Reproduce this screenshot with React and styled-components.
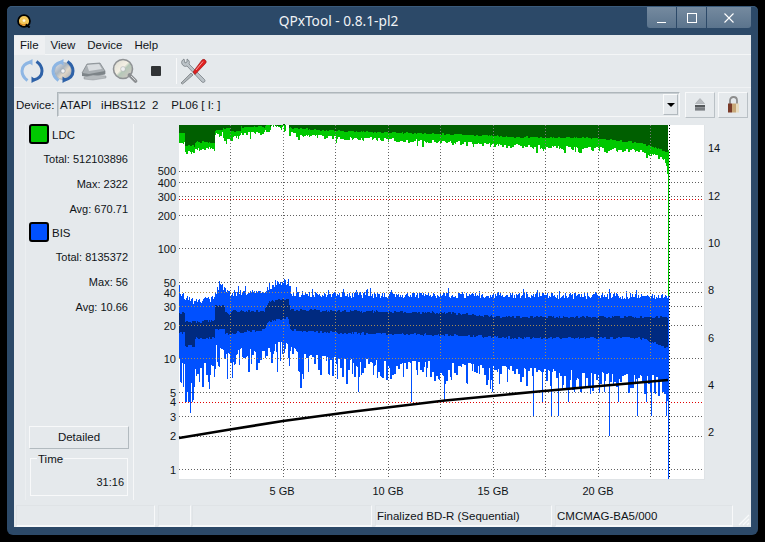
import React from "react";
import styled, { createGlobalStyle } from "styled-components";

const GlobalStyle = createGlobalStyle`
  html, body { margin: 0; padding: 0; background: #000; }
  body { font-family: "Liberation Sans", Arial, sans-serif; font-size: 11.5px; color: #101418; }
`;

const Screen = styled.div`
  width: 765px; height: 542px; background: #000; padding: 6px 7px 7px 7px;
  box-sizing: border-box; overflow: hidden;
`;
const Win = styled.div`
  width: 751px; height: 529px; background: #2c4968; border-radius: 5px 5px 6px 6px;
  padding: 0 7px 8px 7px; box-sizing: border-box; display: flex; flex-direction: column;
  box-shadow: inset 0 1px 0 #3a5a7a;
`;
const TitleBar = styled.div`
  height: 29px; flex: none; display: flex; align-items: flex-start; position: relative;
`;
const Logo = styled.svg`
  width: 14px; height: 14px; margin: 8px 0 0 3px; flex: none;
`;
const Title = styled.div`
  flex: 1; text-align: center; color: #f0f3f6; font-family: "Noto Sans", sans-serif; font-size: 13.7px; line-height: 18px;
  padding: 6px 0 0 0; margin-left: 0; margin-right: 105px;
`;
const Controls = styled.div`
  position: absolute; right: 0; top: 1px; display: flex; gap: 1px;
`;
const CtrlBtn = styled.div`
  width: ${p => p.$w}px; height: 21px; display: flex; align-items: center; justify-content: center;
  background: linear-gradient(#758a9f, #5b748d);
  border-radius: ${p => p.$r || "0"};
`;
const Client = styled.div`
  flex: 1; background: #e5e9ec; display: flex; flex-direction: column; min-height: 0;
`;
const MenuBar = styled.div`
  height: 20px; flex: none; display: flex; box-sizing: border-box; border-bottom: 1px solid #f4f6f7;
  align-items: stretch;
`;
const MenuItem = styled.div`
  padding: 0 6px; line-height: 19px; height: 19px; box-sizing: border-box;
  background: ${p => (p.$active ? "#eef0f2" : "transparent")};
  margin-top: 1px; font-size: 11.5px;
`;
const Toolbar = styled.div`
  height: 33px; flex: none; display: flex; align-items: center; padding-left: 2px;
  box-sizing: border-box; border-bottom: 1px solid #f0f2f4;
`;
const ToolIcon = styled.div`
  width: 31px; height: 28px; flex: none; display: flex; align-items: center; justify-content: center;
`;
const ToolSep = styled.div`
  width: 1px; height: 26px; background: #f8f9fa; margin: 0 0 0 5px;
`;
const DeviceRow = styled.div`
  height: 32px; flex: none; display: flex; align-items: center; box-sizing: border-box; padding: 1px 0 0 2px;
`;
const DeviceLabel = styled.div`
  width: 41px; flex: none;
`;
const Combo = styled.div`
  width: 623px; height: 25px; flex: none; box-sizing: border-box; display: flex; align-items: center;
  border: 1px solid #aeb6bb; border-right-color: #f6f7f8; border-bottom-color: #f6f7f8;
  box-shadow: inset 1px 1px 0 #c8ced2; padding: 0 1px 0 2px;
`;
const ComboText = styled.div`
  flex: 1; white-space: pre;
`;
const ComboArrow = styled.div`
  width: 15px; height: 21px; box-sizing: border-box; display: flex; align-items: center; justify-content: center;
  border: 1px solid; border-color: #fafbfb #b2b9be #b2b9be #fafbfb;
  &::after { content: ""; border-style: solid; border-width: 4px 4px 0 4px; border-color: #000 transparent transparent transparent; }
`;
const SquareBtn = styled.div`
  width: 30px; height: 26px; flex: none; margin-left: ${p => p.$ml}px; box-sizing: border-box;
  display: flex; align-items: center; justify-content: center;
  border: 1px solid; border-color: #f8f9fa #b9c0c5 #b9c0c5 #f8f9fa;
`;
const Main = styled.div`
  flex: 1; display: flex; min-height: 0;
`;
const Side = styled.div`
  width: 109px; flex: none; margin: 4px 0 0 11px; box-sizing: border-box; height: 376px;
  border-left: 1px solid #eceff1; border-right: 1px solid #f6f7f8;
  padding: 0 5px 0 3px; display: flex; flex-direction: column;
`;
const LegendHead = styled.div`
  display: flex; align-items: center; gap: 3px; height: 20px; flex: none;
`;
const LegendLabel = styled.span`
  margin-top: 2px;
`;
const Swatch = styled.div`
  width: 20px; height: 20px; box-sizing: border-box; border: 2px solid #000; border-radius: 3px;
  background: ${p => p.$c}; flex: none;
`;
const StatRow = styled.div`
  height: 25px; line-height: 25px; text-align: right; font-size: 11px; white-space: nowrap;
`;
const Stats = styled.div`
  padding-top: 3px; flex: none;
`;
const Detailed = styled.div`
  width: 100px; height: 23px; flex: none; box-sizing: border-box; line-height: 21px; text-align: center;
  border: 1px solid; border-color: #f8f9fa #b2babf #b2babf #f8f9fa; margin-top: ${p => p.$mt}px;
`;
const TimeBox = styled.div`
  width: 98px; height: 38px; flex: none; box-sizing: border-box; margin: 9px 0 0 1px; position: relative;
  border: 1px solid #f8f9fa; text-align: right; padding: 13px 3px 0 0; line-height: 20px; font-size: 11px;
`;
const TimeLegend = styled.div`
  position: absolute; left: 6px; top: -7px; background: #e5e9ec; padding: 0 1px; line-height: 15px; font-size: 11.5px;
`;
const ChartSvg = styled.svg`
  width: 617px; height: 385px; flex: none; display: block;
  font-family: "Liberation Sans", Arial, sans-serif; font-size: 11px;
`;
const StatusBar = styled.div`
  height: 22px; flex: none; display: flex; box-sizing: border-box; padding-left: 2px; position: relative;
`;
const StatusCell = styled.div`
  width: ${p => p.$w}px; margin-right: ${p => p.$mr}px; flex: none; box-sizing: border-box;
  border-top: 1px solid #dfe3e6; border-left: 1px solid #dfe3e6; border-bottom: 2px solid #f8f9fa; border-right: 1px solid #f8f9fa;
  line-height: 20px; padding-left: 1px; white-space: nowrap;
`;
const Grip = styled.svg`
  position: absolute; right: 1px; bottom: 1px; width: 14px; height: 14px;
`;

/* ---- chart data ---- */
function rng(seed) {
  let a = seed;
  return () => {
    a |= 0; a = (a + 0x6d2b79f5) | 0;
    let t = Math.imul(a ^ (a >>> 15), 1 | a);
    t = (t + Math.imul(t ^ (t >>> 7), 61 | t)) ^ t;
    return ((t ^ (t >>> 14)) >>> 0) / 4294967296;
  };
}
const lerp = (pts, x) => {
  for (let i = 1; i < pts.length; i++) {
    if (x <= pts[i][0]) {
      const [x0, y0] = pts[i - 1]; const [x1, y1] = pts[i];
      return y0 + ((y1 - y0) * (x - x0)) / (x1 - x0 || 1);
    }
  }
  return pts[pts.length - 1][1];
};

const X0 = 179, X1 = 668, TOP = 125;
const darkG = [[179,133],[184,133],[185,146],[194,146],[195,142],[214,142],[215,130],[222,130],[223,128],[229,128],[230,131],[240,131],[241,127],[264,127],[265,126],[270,126],[271,125],[288,125],[289,128],[340,131],[440,134],[520,137],[590,138],[640,143],[655,148],[667,152]];
const lightG = [[179,143],[184,143],[185,152],[194,153],[195,149],[214,149],[215,133],[222,134],[223,140],[229,140],[230,136],[240,137],[241,133],[264,134],[265,131],[270,130],[271,126],[283,126],[284,133],[285,133],[289,134],[340,138],[440,142],[500,146],[570,148],[600,149],[640,151],[655,156],[664,160],[667,172]];
const blueT = [[179,292],[185,298],[195,302],[214,298],[216,293],[219,284],[226,291],[231,296],[240,293],[262,293],[275,285],[284,281],[289,286],[292,294],[340,295],[668,296]];
const dkT = [[179,313],[184,313],[185,322],[214,321],[215,306],[224,306],[225,312],[230,314],[232,311],[264,311],[266,306],[270,301],[288,299],[290,310],[340,311],[450,313],[500,317],[668,317]];
const dkB = [[179,333],[184,333],[185,346],[194,346],[195,338],[214,338],[215,329],[224,329],[225,334],[230,333],[264,330],[268,322],[288,318],[290,330],[340,333],[450,335],[520,338],[640,338],[668,348]];
const blueB = [[179,358],[184,362],[185,378],[194,380],[195,362],[214,362],[216,345],[226,350],[232,356],[240,348],[262,350],[272,346],[284,338],[290,345],[300,352],[340,358],[450,362],[600,372],[668,376]];

const spikes = { 186: 402, 192: 402, 358: 392, 411: 402, 444: 400, 492: 392, 533: 416, 542: 402, 551: 416, 558: 416, 568: 402, 590: 394, 604: 392, 609: 436, 618: 402, 637: 416, 646: 402, 651: 416, 666: 416 };

function buildPaths() {
  const r = rng(20240611);
  let g1 = "", g2 = "", b1 = "", b2 = "";
  let nL = 0, nD = 0, nDT = 0, nDB = 0, nB = 0;
  for (let x = X0; x < X1; x++) {
    const px = x + 0.5;
    if (x % 2 === 0 || r() < 0.3) {
      nL = (r() - 0.5) * 4 + (r() < 0.06 ? 4 : 0);
      nD = (r() - 0.5) * 1.5;
      nDT = (r() - 0.5) * 2.5;
      nDB = (r() - 0.5) * 2.5;
      nB = Math.pow(r(), 1.5) * (x < 350 ? 30 : 22) + (r() < 0.05 ? 8 : 0);
    }
    const nT = (r() - 0.5) * 6 - (r() < 0.07 ? 5 : 0);
    if (x < 286 || x > 288) {
      const lb = Math.round(lerp(lightG, x) + nL);
      const db = Math.round(lerp(darkG, x) + nD);
      g1 += `M${px} ${TOP}V${lb}`;
      g2 += `M${px} ${TOP}V${Math.min(db, lb)}`;
    }
    const t = Math.round(lerp(blueT, x) + nT);
    const b = spikes[x] || Math.round(lerp(blueB, x) + nB);
    b1 += `M${px} ${t}V${b}`;
    b2 += `M${px} ${Math.round(lerp(dkT, x) + nDT)}V${Math.round(lerp(dkB, x) + nDB)}`;
  }
  return { g1, g2, b1, b2 };
}
const paths = buildPaths();

const gridY = [171, 182, 196, 215, 248, 282, 292, 306, 325, 358, 392, 416, 436, 469];
const gridX = [230, 283, 335, 388, 440, 493, 545, 598, 650];
const leftLabels = [[500,171],[400,183],[300,197],[200,216],[100,249],[50,283],[40,293],[30,307],[20,326],[10,359],[5,393],[4,402],[3,417],[2,436],[1,470]];
const rightLabels = [[14,148],[12,196],[10,243],[8,290],[6,338],[4,385],[2,432]];
const xLabels = [["5 GB",282],["10 GB",388],["15 GB",493],["20 GB",598]];
const curve = "M179 438 L230 429.5 L283 421 L350 412 L445 400.5 L533 392 L600 386 L668 380";

const Chart = () => (
  <ChartSvg viewBox="134 120 617 385">
    <rect x="179" y="125" width="525" height="354" fill="#fff" />
    <path d="M179 479.5H704.5V125" stroke="#dfe3e6" fill="none" />
    <g shapeRendering="crispEdges">
      <g stroke="#606060" strokeDasharray="1 2" fill="none">
        {gridY.map(y => <line key={y} x1="179" x2="702" y1={y + 0.5} y2={y + 0.5} />)}
        {gridX.map(x => <line key={x} x1={x + 0.5} x2={x + 0.5} y1="125" y2="479" />)}
      </g>
      <g stroke="#e00000" strokeDasharray="1 2">
        <line x1="179" x2="702" y1="199.5" y2="199.5" />
        <line x1="179" x2="702" y1="402.5" y2="402.5" />
      </g>
      <path d={paths.g1} stroke="#00c800" fill="none" />
      <path d={paths.g2} stroke="#005f00" fill="none" />
      <path d={paths.b1} stroke="#0050ff" fill="none" />
      <path d={paths.b2} stroke="#002a80" fill="none" />
      <g stroke="#a58a55" strokeDasharray="1 2" fill="none">
        {[292, 306, 325, 358].map(y => <line key={y} x1="179" x2="668" y1={y + 0.5} y2={y + 0.5} />)}
        {gridX.map(x => <line key={x} x1={x + 0.5} x2={x + 0.5} y1="298" y2="360" />)}
      </g>
      <g stroke="#7a7a7a" strokeDasharray="1 2" fill="none">
        {gridX.map(x => <line key={x} x1={x + 0.5} x2={x + 0.5} y1="125" y2="150" />)}
      </g>
      <line x1="668.5" x2="668.5" y1="150" y2="296" stroke="#00c800" />
      <line x1="668.5" x2="668.5" y1="296" y2="479" stroke="#0050ff" />
      <line x1="669.5" x2="669.5" y1="125" y2="479" stroke="#000" strokeDasharray="1 2" />
    </g>
    <path d={curve} stroke="#000" strokeWidth="2.6" fill="none" />
    <g fill="#101418" textAnchor="end">
      {leftLabels.map(([t, y]) => <text key={t} x="176" y={y + 4}>{t}</text>)}
    </g>
    <g fill="#101418">
      {rightLabels.map(([t, y]) => <text key={t} x="708" y={y + 4}>{t}</text>)}
    </g>
    <g fill="#101418" textAnchor="middle">
      {xLabels.map(([t, x]) => <text key={t} x={x} y="495">{t}</text>)}
    </g>
  </ChartSvg>
);

/* ---- icons ---- */
const Arrows = ({ c = "#2e62a8", l = "#8db6e4" }) => (
  <>
    <path d="M11 4 C5 5.5 2.5 9 2.5 13 C2.5 17 4.5 20 8 22.5" fill="none" stroke={l} strokeWidth="3" />
    <path d="M14 22 C20 20.5 22.5 17 22.5 13 C22.5 9 20.5 6 17 3.5" fill="none" stroke={c} strokeWidth="3" />
    <path d="M13 1 L13 7.5 L8 4 Z" fill={l} />
    <path d="M12 25 L12 18.5 L17 22 Z" fill={c} />
  </>
);
const ReloadIcon = () => (
  <svg width="26" height="26" viewBox="0 0 25 26"><Arrows /></svg>
);
const DiscReloadIcon = () => (
  <svg width="26" height="26" viewBox="0 0 25 26">
    <defs>
      <linearGradient id="disc1" x1="0" y1="0" x2="1" y2="1">
        <stop offset="0" stopColor="#e8e8ee" /><stop offset=".4" stopColor="#a8b4c0" />
        <stop offset=".6" stopColor="#e2d8c8" /><stop offset="1" stopColor="#9aa6b4" />
      </linearGradient>
    </defs>
    <circle cx="12.5" cy="13" r="8.5" fill="url(#disc1)" stroke="#8b97a3" strokeWidth=".6" />
    <circle cx="12.5" cy="13" r="2.2" fill="#f2f4f6" stroke="#8b97a3" strokeWidth=".6" />
    <Arrows />
  </svg>
);
const DriveIcon = () => (
  <svg width="26" height="22" viewBox="0 0 26 22">
    <path d="M1 13 L6 4 L19 3 L24 11 L24 14 L8 17 Z" fill="#a9afb3" stroke="#6d7478" strokeWidth=".6" />
    <path d="M6 5 L18 4 L21 9 L8 11 Z" fill="#d8dcdf" />
    <path d="M1 13 L8 14 L24 11 L24 14 L8 17 L1 16 Z" fill="#7d8488" />
    <path d="M3 17 L12 15 L25 16 L25 18 L12 20 L3 19 Z" fill="#b6bbbe" stroke="#80868a" strokeWidth=".4" />
  </svg>
);
const ScanIcon = () => (
  <svg width="26" height="26" viewBox="0 0 26 26">
    <defs>
      <linearGradient id="disc2" x1="0" y1="0" x2="1" y2="1">
        <stop offset="0" stopColor="#d8d8d0" /><stop offset=".45" stopColor="#f4f0e4" />
        <stop offset=".55" stopColor="#b5c8b8" /><stop offset="1" stopColor="#d8c8c8" />
      </linearGradient>
    </defs>
    <circle cx="11" cy="11" r="9.5" fill="url(#disc2)" stroke="#8f9294" strokeWidth="1.6" />
    <circle cx="11" cy="11" r="2.4" fill="#eef0f0" stroke="#a0a4a6" strokeWidth=".5" />
    <path d="M17.5 17 L23.5 23" stroke="#8a8d90" strokeWidth="3.6" strokeLinecap="round" />
    <path d="M19 18 L23.5 22.5" stroke="#d8dadc" strokeWidth="1" />
  </svg>
);
const StopIcon = () => (
  <svg width="12" height="12" viewBox="0 0 12 12"><rect x="1" y="1" width="10" height="10" rx="1" fill="#303335" /></svg>
);
const ToolsIcon = () => (
  <svg width="28" height="28" viewBox="0 0 28 28">
    <path d="M5 2 C3 3 2 5 3 7 C4 9 6 10 8 9 L23 25 C24 26 26 25 26 24 C26 23 26 23 25 22 L10 7 C11 5 10 3 8 2 L8 5 L6 6 Z" fill="#bcc3c8" stroke="#6c7378" strokeWidth=".7" />
    <path d="M12 16 L4 24 L2 26 L3.5 27 L6 25 L14 18 Z" fill="#b0b6ba" stroke="#5e6468" strokeWidth=".6" />
    <path d="M14 15 L23 3 C24 2 26 2 27 4 C27.5 5 27 6 26 7 L16 17.5 Z" fill="#e02020" stroke="#8e1414" strokeWidth=".6" />
    <path d="M17 13 L24 4.5" stroke="#f6a0a0" strokeWidth="1" />
  </svg>
);
const EjectIcon = () => (
  <svg width="12" height="13" viewBox="0 0 12 13">
    <path d="M6 0.5 L10.5 5.5 H1.5 Z" fill="#b8bcc0" stroke="#9a9ea2" strokeWidth=".5" />
    <rect x="1" y="7" width="10" height="2.6" fill="#55595c" />
    <rect x="1" y="10" width="10" height="2.6" fill="#7a7e82" />
  </svg>
);
const LockIcon = () => (
  <svg width="13" height="18" viewBox="0 0 13 18">
    <path d="M3 8 V4.5 C3 2.5 4.5 1 6.5 1 C8.5 1 10 2.5 10 4.5 V8" fill="none" stroke="#8d8d8d" strokeWidth="1.8" />
    <rect x="1" y="7.5" width="4" height="9" fill="#7a3a28" />
    <rect x="5" y="7.5" width="4" height="9" fill="#c8a878" />
    <rect x="9" y="7.5" width="3" height="9" fill="#e8dcc0" />
  </svg>
);

export default function App() {
  return (
    <>
      <GlobalStyle />
      <Screen>
        <Win>
          <TitleBar>
            <Logo viewBox="0 0 16 16">
              <circle cx="8" cy="8" r="6.8" fill="#f3c85a" stroke="#000" strokeWidth="2" />
              <circle cx="8" cy="7.5" r="1.6" fill="#fff6e0" />
              <path d="M3 10 C5 13 9 13 11 11" stroke="#e08a20" strokeWidth="1.4" fill="none" />
              <path d="M10 12 L14.5 15.5" stroke="#000" strokeWidth="2.4" />
            </Logo>
            <Title>QPxTool - 0.8.1-pl2</Title>
            <Controls>
              <CtrlBtn $w={29} $r="0 0 0 3px">
                <svg width="10" height="10" viewBox="0 0 10 10"><path d="M0 9.5H9" stroke="#fff" strokeWidth="1" /></svg>
              </CtrlBtn>
              <CtrlBtn $w={29}>
                <svg width="10" height="10" viewBox="0 0 10 10"><rect x=".5" y=".5" width="9" height="9" fill="none" stroke="#fff" /></svg>
              </CtrlBtn>
              <CtrlBtn $w={44} $r="0 0 3px 0">
                <svg width="10" height="10" viewBox="0 0 10 10"><path d="M.5 .5L9.5 9.5M9.5 .5L.5 9.5" stroke="#fff" strokeWidth="1.1" /></svg>
              </CtrlBtn>
            </Controls>
          </TitleBar>
          <Client>
            <MenuBar>
              <MenuItem $active>File</MenuItem>
              <MenuItem>View</MenuItem>
              <MenuItem>Device</MenuItem>
              <MenuItem>Help</MenuItem>
            </MenuBar>
            <Toolbar>
              <ToolIcon><ReloadIcon /></ToolIcon>
              <ToolIcon><DiscReloadIcon /></ToolIcon>
              <ToolIcon><DriveIcon /></ToolIcon>
              <ToolIcon><ScanIcon /></ToolIcon>
              <ToolIcon><StopIcon /></ToolIcon>
              <ToolSep />
              <ToolIcon><ToolsIcon /></ToolIcon>
            </Toolbar>
            <DeviceRow>
              <DeviceLabel>Device:</DeviceLabel>
              <Combo>
                <ComboText>{"ATAPI   iHBS112  2    PL06 [ I: ]"}</ComboText>
                <ComboArrow />
              </Combo>
              <SquareBtn $ml={5}><EjectIcon /></SquareBtn>
              <SquareBtn $ml={3}><LockIcon /></SquareBtn>
            </DeviceRow>
            <Main>
              <Side>
                <LegendHead><Swatch $c="#00c800" /><LegendLabel>LDC</LegendLabel></LegendHead>
                <Stats>
                  <StatRow>Total: 512103896</StatRow>
                  <StatRow>Max: 2322</StatRow>
                  <StatRow>Avg: 670.71</StatRow>
                </Stats>
                <LegendHead><Swatch $c="#0050ff" /><LegendLabel>BIS</LegendLabel></LegendHead>
                <Stats>
                  <StatRow>Total: 8135372</StatRow>
                  <StatRow>Max: 56</StatRow>
                  <StatRow>Avg: 10.66</StatRow>
                </Stats>
                <Detailed $mt={106}>Detailed</Detailed>
                <TimeBox>
                  <TimeLegend>Time</TimeLegend>
                  31:16
                </TimeBox>
              </Side>
              <Chart />
            </Main>
            <StatusBar>
              <StatusCell $w={139} $mr={3} />
              <StatusCell $w={33} $mr={1} />
              <StatusCell $w={180} $mr={3} />
              <StatusCell $w={177} $mr={3}>Finalized BD-R (Sequential)</StatusCell>
              <StatusCell $w={178} $mr={0}>CMCMAG-BA5/000</StatusCell>
              <Grip viewBox="0 0 14 14">
                <path d="M13 3L3 13M13 7L7 13M13 11L11 13" stroke="#f8f9fa" strokeWidth="1.2" />
              </Grip>
            </StatusBar>
          </Client>
        </Win>
      </Screen>
    </>
  );
}
